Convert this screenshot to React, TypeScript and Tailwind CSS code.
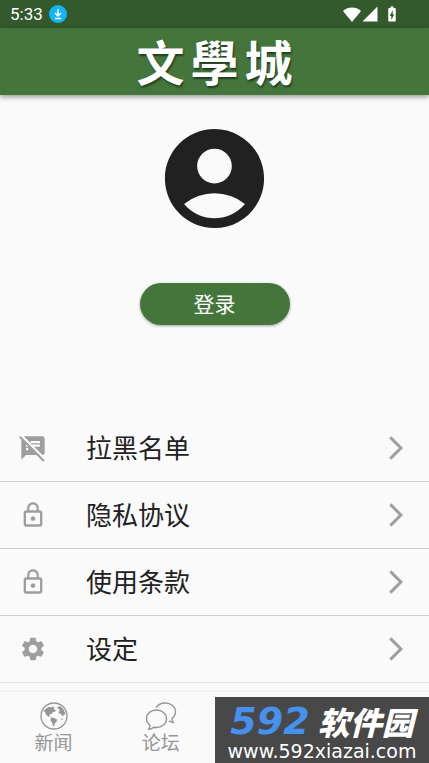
import React from "react";
import {
  MdAccountCircle,
  MdArrowForwardIos,
  MdBatteryChargingFull,
  MdLockOutline,
  MdSettings,
  MdSignalCellular4Bar,
  MdSpeakerNotesOff,
} from "react-icons/md";

interface MenuItem {
  label: string;
  icon: React.ReactNode;
}

function GlobeIcon() {
  return (
    <svg viewBox="0 0 28 28" className="size-7" fill="currentColor">
      <circle cx="14" cy="14" r="13" fill="none" stroke="currentColor" strokeWidth="1.3" />
      <path d="M5 7.5 8.5 5l3 .2 1-.8 2 1.2-1 1.4 2.5 1.2-1.2 1.6-1.8.2-1.5 2-2.5.8 1 1.6-.8.6-3.2-2.2-1-3-1.8-.6z" />
      <path d="m11 15.5 2.6.2 3.4 1.8-.4 2.3-1.8 1.7-.6 2.5-1.2.2-.8-3.4-1.8-2.4z" />
      <path d="m17.5 5 2.8-.8 3 3 2 4-.3 1.5-1.5-.5.3 1.6-1.2.4-1.8-2.4-1.6.1-.5-1.8 1-1.3-.5-1.7-1.9-.6z" />
      <path d="m21.5 16.3 1.3.4-.3 1.3-1.4-.4z" />
    </svg>
  );
}

function BubblesIcon() {
  return (
    <svg viewBox="0 0 32 28" className="h-7 w-8" fill="none" stroke="currentColor" strokeWidth="1.4">
      <path d="M11.5 8C6 8 1.5 11.5 1.5 16.5c0 3 1.5 5.200 3.500 6.700 0 1.600-.5 2.800-1.300 4 2 0 3.800-.8 5-2 1 .2 1.900.3 2.800.3 5.500 0 10-3.700 10-8.700S17 8 11.500 8z" />
      <path d="M11 5.500C12.800 2.800 16.300 1 20.300 1 26 1 30.500 4.700 30.500 9.500c0 3-1.600 5.500-3.500 6.900 0 1.700.5 3 1.200 4.100-1.900-.2-3.200-.8-4.400-1.800" />
    </svg>
  );
}

const menuItems: MenuItem[] = [
  { label: "拉黑名单", icon: <MdSpeakerNotesOff size={28} /> },
  { label: "隐私协议", icon: <MdLockOutline size={28} /> },
  { label: "使用条款", icon: <MdLockOutline size={28} /> },
  { label: "设定", icon: <MdSettings size={28} /> },
];

const tabs: MenuItem[] = [
  { label: "新闻", icon: <GlobeIcon /> },
  { label: "论坛", icon: <BubblesIcon /> },
];

function StatusBar() {
  return (
    <div className="flex h-7 items-center bg-[#33592d] pr-7 pl-[10px] text-white">
      <span className="font-[Roboto,sans-serif] text-[17px] leading-7">5:33</span>
      <span className="ml-1.5 flex size-[18px] items-center justify-center rounded-full bg-[#12b5fb]">
        <svg viewBox="0 0 18 18" className="size-[18px]" fill="none" stroke="currentColor" strokeWidth="1.5">
          <path d="M9 4v7M6 8l3 3 3-3M6 13.500h6" />
        </svg>
      </span>
      <div className="ml-auto flex items-center">
        <svg viewBox="0 0 18 15" className="h-[15px] w-[18px]" fill="currentColor">
          <path d="M9 15 0 4C5 -.6 13 -.6 18 4z" />
        </svg>
        <MdSignalCellular4Bar size={18} />
        <MdBatteryChargingFull size={18} className="ml-1" />
      </div>
    </div>
  );
}

function Header() {
  return (
    <header className="relative flex h-[67px] items-center justify-center bg-[#44763c] pb-1 shadow-[0_2px_5px_rgba(0,0,0,0.4)]">
      <h1 className="flex gap-1.5 font-['Noto_Sans_CJK_TC',sans-serif] text-5xl font-bold text-white [text-shadow:1px_2px_2px_rgba(0,0,0,0.5)]">
        <span>文</span>
        <span>學</span>
        <span>城</span>
      </h1>
    </header>
  );
}

function MenuRow({ label, icon }: MenuItem) {
  return (
    <li className="border-b border-[#cfcfcf] last:border-[#e4e4e4]">
      <button type="button" className="flex h-[66px] w-full items-center px-[19px] text-left text-[#9e9e9e]">
        {icon}
        <span className="ml-[39px] flex-1 pb-1 text-[26px] text-[#212121]">{label}</span>
        <MdArrowForwardIos size={28} />
      </button>
    </li>
  );
}

function Watermark() {
  return (
    <div className="absolute right-0 bottom-0 flex h-[66px] w-[214px] flex-col items-center justify-between bg-[#484848] pt-2 text-white">
      <div className="flex items-center gap-2 italic">
        <span className="font-['DejaVu_Sans',sans-serif] text-[38px] leading-8 font-bold text-[#4690ee]">592</span>
        <span className="text-[32px] leading-8 font-black">软件园</span>
      </div>
      <span className="font-['DejaVu_Sans',sans-serif] text-[19px] leading-6">www.592xiazai.com</span>
    </div>
  );
}

export default function App() {
  return (
    <div className="flex min-h-screen flex-col bg-[#fafafa] font-['Noto_Sans_CJK_SC',sans-serif]">
      <StatusBar />
      <Header />

      <main className="flex flex-1 flex-col">
        <div className="flex flex-col items-center pt-6">
          <MdAccountCircle size={119} className="text-[#212121]" />
          <button
            type="button"
            className="mt-[45px] h-[42px] w-[150px] rounded-full bg-[#44763c] text-[21px] text-white shadow-[0_1px_3px_rgba(0,0,0,0.35)]"
          >
            登录
          </button>
        </div>

        <ul className="mt-[90px]">
          {menuItems.map((item) => (
            <MenuRow key={item.label} {...item} />
          ))}
        </ul>
      </main>

      <nav className="relative grid h-[73px] grid-cols-4 border-t-2 border-[#f2f2f2] text-[#969696]">
        {tabs.map((tab) => (
          <button key={tab.label} type="button" className="flex flex-col items-center justify-center">
            {tab.icon}
            <span className="text-[19px] leading-6">{tab.label}</span>
          </button>
        ))}
        <Watermark />
      </nav>
    </div>
  );
}
